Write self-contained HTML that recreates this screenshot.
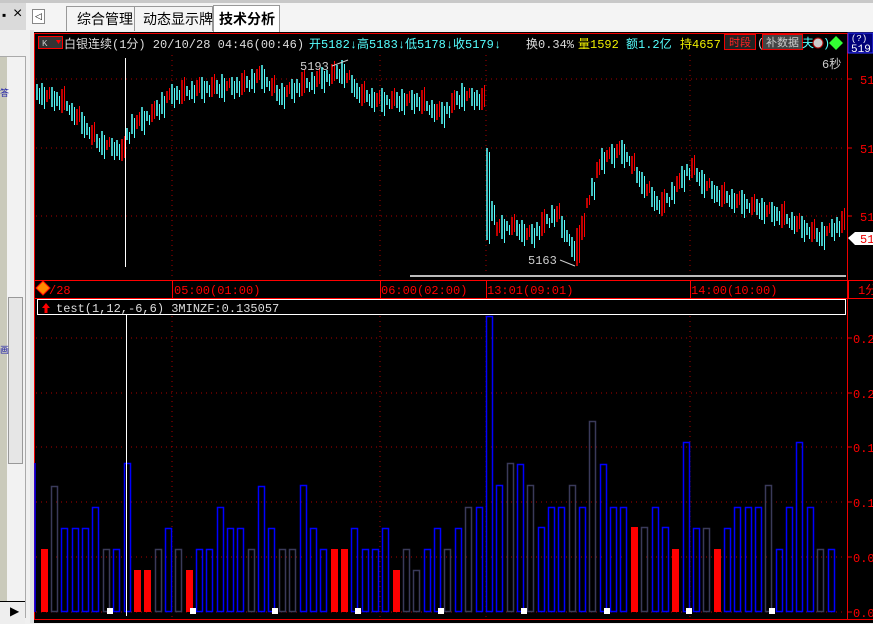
<!DOCTYPE html>
<html><head><meta charset="utf-8">
<style>
body{margin:0;width:873px;height:623px;overflow:hidden;background:#f0f0f0;font-family:"Liberation Mono","Noto Sans CJK SC",monospace;}
.abs{position:absolute}
</style></head>
<body>
<div class="abs" style="left:0;top:0;width:873px;height:30px;background:#f4f4f4;border-top:3px solid #c8c8c8;box-sizing:border-box"></div>
<div class="abs" style="left:0;top:3px;width:26px;height:27px;background:#dadada"></div>
<div class="abs" style="left:2px;top:8px;font:bold 12px 'Liberation Sans',sans-serif;color:#000">▪</div>
<div class="abs" style="left:13px;top:5px;font:16px 'Liberation Sans',sans-serif;color:#000">×</div>
<div class="abs" style="left:32px;top:9px;width:11px;height:13px;border:1px solid #888;background:#fff;font:9px sans-serif;text-align:center;line-height:13px">◁</div>
<div class="abs" style="left:66px;top:6px;width:67px;height:24px;border:1px solid #999;border-bottom:none;background:#f4f4f4"></div>
<div class="abs" style="left:134px;top:6px;width:77px;height:24px;border:1px solid #999;border-bottom:none;background:#f4f4f4"></div>
<div class="abs" style="left:213px;top:5px;width:65px;height:26px;border:1px solid #999;border-bottom:none;background:#fff"></div>
<div class="abs" style="left:77px;top:9px;font:14px 'Noto Sans CJK SC',sans-serif;color:#000">综合管理</div>
<div class="abs" style="left:143px;top:9px;font:14px 'Noto Sans CJK SC',sans-serif;color:#000">动态显示牌</div>
<div class="abs" style="left:219px;top:9px;font:bold 14px 'Noto Sans CJK SC',sans-serif;color:#000">技术分析</div>
<div class="abs" style="left:0;top:56px;width:26px;height:562px;background:#f0f0f0;border:1px solid #aaa;box-sizing:border-box"></div>
<div class="abs" style="left:0;top:57px;width:7px;height:550px;background:#cacabb"></div>
<div class="abs" style="left:7px;top:57px;width:18px;height:550px;background:#f2f2f2"></div>
<div class="abs" style="left:8px;top:297px;width:13px;height:165px;background:#e6e6e6;border:1px solid #999"></div>
<div class="abs" style="left:0;top:86px;font:9px sans-serif;color:#22a">答</div>
<div class="abs" style="left:0;top:343px;font:9px sans-serif;color:#22a">画</div>
<div class="abs" style="left:0;top:601px;width:25px;height:22px;background:#eee;border-top:1px solid #000"></div>
<div class="abs" style="left:10px;top:604px;font:12px sans-serif">▶</div>
<div class="abs" style="left:30px;top:30px;width:4px;height:593px;background:#e0e0e0"></div>
<svg class="abs" style="left:34px;top:32px" width="839" height="591" viewBox="34 32 839 591" font-family="Liberation Mono, Noto Sans CJK SC, monospace">
<rect x="34" y="32" width="839" height="591" fill="#000"/>
<rect x="34.5" y="33.5" width="840" height="586" fill="none" stroke="#e00"/>
<g stroke="#a00" stroke-dasharray="1 4">
<path d="M36 79H846M36 148H846M36 216H846M36 338H846M36 393H846M36 447H846M36 502H846M36 557H846M36 612H846"/>
<path d="M172 55V278M380 55V278M486 55V278M690 55V278M172 316V620M380 316V620M486 316V620M690 316V620"/>
</g>
<g stroke-width="1.5">
<path id="cy" stroke="#5ff" d="M37 84V100M42 83V105M52 87V107M57 92V106M67 101V111M72 103V121M82 112V134M87 123V135M97 134V148M102 131V155M112 138V156M117 140V156M127 128V140M132 114V134M142 107V131M147 111V121M157 100V116M162 92V114M172 84V104M177 86V100M187 86V96M192 81V99M202 77V99M207 81V93M217 80V94M222 74V98M232 77V95M237 77V93M247 76V88M252 69V89M262 65V89M267 77V87M277 85V101M282 83V105M292 79V99M297 79V93M307 78V88M312 72V90M322 67V89M327 70V82M337 65V79M342 60V84M352 75V93M357 83V99M367 90V102M372 88V108M382 88V112M387 95V105M397 92V108M402 89V111M412 90V110M417 93V107M427 101V111M432 100V118M442 102V124M447 102V114M457 91V105M462 83V107M472 88V106M477 90V106M487 148V240M492 201V221M502 215V239M507 221V231M517 220V236M522 220V242M532 224V244M537 222V236M547 214V224M552 205V223M562 216V238M567 230V242M572 237V257M592 178V196M602 148V170M612 144V164M622 140V164M627 152V162M637 167V183M642 172V194M652 187V207M657 196V210M667 193V203M672 182V200M682 166V188M687 164V176M697 168V182M702 170V194M712 181V199M717 186V202M727 191V203M732 189V209M742 190V214M747 199V209M757 199V215M762 198V220M772 202V222M777 207V221M787 214V224M792 212V230M802 216V238M807 223V235M817 228V242M822 222V246M832 219V237M837 217V233"/>
<path id="rd" stroke="#f00" d="M47 90V102M62 89V113M77 109V125M92 125V145M107 140V150M122 139V161M137 115V129M152 104V122M167 91V103M182 80V104M197 80V96M212 77V97M227 81V91M242 73V95M257 69V83M272 78V96M287 85V97M302 72V96M317 71V87M332 64V84M347 73V83M362 84V106M377 93V107M392 91V109M407 94V106M422 90V114M437 104V120M452 93V113M467 91V101M482 88V110M497 222V236M512 217V235M527 228V240M542 212V236M557 206V222M577 228V266M582 216V240M587 198V208M597 162V178M607 150V162M617 144V158M632 156V174M647 184V196M662 192V216M677 176V192M692 158V178M707 181V191M722 185V207M737 194V208M752 197V215M767 205V217M782 204V228M797 216V232M812 222V242M827 226V236M842 211V233"/>
</g>
<use href="#cy" x="2.5" y="4"/>
<use href="#rd" x="2.5" y="-3"/>
<path d="M125.5 58V267" stroke="#fff"/>
<text x="300" y="70" fill="#ccc" font-size="12">5193</text><path d="M332 66L348 60" stroke="#ccc"/>
<text x="528" y="264" fill="#ccc" font-size="12">5163</text><path d="M560 260L575 266" stroke="#ccc"/>
<text x="822" y="68" fill="#ccc" font-size="12">6秒</text>
<path d="M410 276H846" stroke="#bbb" stroke-width="2"/>
<path d="M847.5 34V620" stroke="#e00"/>
<path d="M847 79h5M847 148h5M847 216h5M847 338h5M847 393h5M847 447h5M847 502h5M847 557h5M847 612h5" stroke="#e00"/>
<g fill="#f00" font-size="12">
<text x="860" y="84">51</text><text x="860" y="153">51</text><text x="860" y="221">51</text>
<text x="853" y="343">0.2</text><text x="853" y="398">0.2</text><text x="853" y="452">0.1</text><text x="853" y="507">0.1</text><text x="853" y="562">0.0</text><text x="853" y="617">0.0</text>
</g>
<path d="M848 238 L855 232 L873 232 L873 245 L855 245 Z" fill="#fff"/><text x="860" y="243" fill="#e00" font-size="12">51</text>
<rect x="848" y="33" width="25" height="20" fill="#00007a" stroke="#33f"/><text x="851" y="41" fill="#fff" font-size="9">(?)</text><text x="851" y="52" fill="#fff" font-size="11">519</text>
<rect x="38.5" y="36.5" width="24" height="12" fill="#333" stroke="#f00"/><text x="42" y="46" fill="#ccc" font-size="9">K</text><path d="M56 40 L61 40 L58.5 44Z" fill="#f00"/>
<text x="64" y="48" font-size="12" fill="#ddd">白银连续(1分) 20/10/28 04:46(00:46)</text>
<text x="309" y="48" font-size="12" fill="#5ff">开5182↓高5183↓低5178↓收5179↓</text>
<text x="526" y="48" font-size="12" fill="#ddd">换0.34%</text>
<text x="578" y="48" font-size="12" fill="#ee0">量1592</text>
<text x="626" y="48" font-size="12" fill="#5ff">额1.2亿</text>
<text x="680" y="48" font-size="12" fill="#ee0">持4657</text>
<rect x="724.5" y="34.5" width="31" height="15" fill="#222" stroke="#e00"/><text x="729" y="46" fill="#f22" font-size="11">时段</text>
<text x="757" y="47" fill="#ccc" font-size="12">(</text><rect x="762.5" y="34.5" width="40" height="15" fill="#444" stroke="#e00"/><text x="766" y="46" fill="#ccc" font-size="11">补数据</text>
<text x="802" y="47" fill="#5ff" font-size="12">夫</text><circle cx="818" cy="43" r="5" fill="#ccc" stroke="#a00"/><text x="823" y="47" fill="#5ff" font-size="12">)</text><path d="M836 36 L843 43 L836 50 L829 43Z" fill="#3f3"/>
<path d="M34 280.5H873M34 298.5H873M172.5 281V298M380.5 281V298M486.5 281V298M690.5 281V298M848.5 281V298" stroke="#f00"/>
<path d="M43 281 L50 288 L43 295 L36 288Z" fill="#f80" stroke="#f00"/>
<g fill="#f00" font-size="12">
<text x="49" y="294">/28</text><text x="174" y="294">05:00(01:00)</text><text x="381" y="294">06:00(02:00)</text><text x="487" y="294">13:01(09:01)</text><text x="691" y="294">14:00(10:00)</text><text x="858" y="294">1分</text>
</g>
<rect x="37.5" y="299.5" width="808" height="15" fill="#000" stroke="#fff"/>
<path d="M46 303 L50 308 L47.5 308 L47.5 313 L44.5 313 L44.5 308 L42 308Z" fill="#f00"/>
<text x="56" y="312" fill="#ddd" font-size="12">test(1,12,-6,6) 3MINZF:0.135057</text>
<g fill="#f00">
<rect x="41" y="549" width="7" height="63"/><rect x="134" y="570" width="7" height="42"/><rect x="144" y="570" width="7" height="42"/><rect x="186" y="570" width="7" height="42"/><rect x="331" y="549" width="7" height="63"/><rect x="341" y="549" width="7" height="63"/><rect x="393" y="570" width="7" height="42"/><rect x="631" y="527" width="7" height="85"/><rect x="672" y="549" width="7" height="63"/><rect x="714" y="549" width="7" height="63"/>
</g>
<g fill="none" stroke="#00f" stroke-width="1.5">
<path d="M35 463V612"/>
<rect x="61.5" y="528.5" width="6" height="83"/><rect x="72.5" y="528.5" width="6" height="83"/><rect x="82.5" y="528.5" width="6" height="83"/><rect x="92.5" y="507.5" width="6" height="104"/><rect x="113.5" y="549.5" width="6" height="62"/><rect x="124.5" y="463.5" width="6" height="148"/><rect x="165.5" y="528.5" width="6" height="83"/><rect x="196.5" y="549.5" width="6" height="62"/><rect x="206.5" y="549.5" width="6" height="62"/><rect x="217.5" y="507.5" width="6" height="104"/><rect x="227.5" y="528.5" width="6" height="83"/><rect x="237.5" y="528.5" width="6" height="83"/><rect x="258.5" y="486.5" width="6" height="125"/><rect x="268.5" y="528.5" width="6" height="83"/><rect x="300.5" y="485.5" width="6" height="126"/><rect x="310.5" y="528.5" width="6" height="83"/><rect x="320.5" y="549.5" width="6" height="62"/><rect x="351.5" y="528.5" width="6" height="83"/><rect x="362.5" y="549.5" width="6" height="62"/><rect x="372.5" y="549.5" width="6" height="62"/><rect x="382.5" y="528.5" width="6" height="83"/><rect x="424.5" y="549.5" width="6" height="62"/><rect x="434.5" y="528.5" width="6" height="83"/><rect x="455.5" y="528.5" width="6" height="83"/><rect x="476.5" y="507.5" width="6" height="104"/><rect x="486.5" y="316.5" width="6" height="295"/><rect x="496.5" y="485.5" width="6" height="126"/><rect x="517.5" y="464.5" width="6" height="147"/><rect x="538.5" y="527.5" width="6" height="84"/><rect x="548.5" y="507.5" width="6" height="104"/><rect x="558.5" y="507.5" width="6" height="104"/><rect x="579.5" y="507.5" width="6" height="104"/><rect x="600.5" y="464.5" width="6" height="147"/><rect x="610.5" y="507.5" width="6" height="104"/><rect x="620.5" y="507.5" width="6" height="104"/><rect x="652.5" y="507.5" width="6" height="104"/><rect x="662.5" y="527.5" width="6" height="84"/><rect x="683.5" y="442.5" width="6" height="169"/><rect x="693.5" y="528.5" width="6" height="83"/><rect x="724.5" y="528.5" width="6" height="83"/><rect x="734.5" y="507.5" width="6" height="104"/><rect x="745.5" y="507.5" width="6" height="104"/><rect x="755.5" y="507.5" width="6" height="104"/><rect x="776.5" y="549.5" width="6" height="62"/><rect x="786.5" y="507.5" width="6" height="104"/><rect x="796.5" y="442.5" width="6" height="169"/><rect x="807.5" y="507.5" width="6" height="104"/><rect x="828.5" y="549.5" width="6" height="62"/>
</g>
<g fill="none" stroke="#3a3a5a" stroke-width="1.5">
<rect x="51.5" y="486.5" width="6" height="125"/><rect x="103.5" y="549.5" width="6" height="62"/><rect x="155.5" y="549.5" width="6" height="62"/><rect x="175.5" y="549.5" width="6" height="62"/><rect x="248.5" y="549.5" width="6" height="62"/><rect x="279.5" y="549.5" width="6" height="62"/><rect x="289.5" y="549.5" width="6" height="62"/><rect x="403.5" y="549.5" width="6" height="62"/><rect x="413.5" y="570.5" width="6" height="41"/><rect x="444.5" y="549.5" width="6" height="62"/><rect x="465.5" y="507.5" width="6" height="104"/><rect x="507.5" y="463.5" width="6" height="148"/><rect x="527.5" y="485.5" width="6" height="126"/><rect x="569.5" y="485.5" width="6" height="126"/><rect x="589.5" y="421.5" width="6" height="190"/><rect x="641.5" y="527.5" width="6" height="84"/><rect x="703.5" y="528.5" width="6" height="83"/><rect x="765.5" y="485.5" width="6" height="126"/><rect x="817.5" y="549.5" width="6" height="62"/>
</g>
<path d="M126.5 315V616" stroke="#fff"/>
<g fill="#fff">
<rect x="107" y="608" width="6" height="6"/><rect x="190" y="608" width="6" height="6"/><rect x="272" y="608" width="6" height="6"/><rect x="355" y="608" width="6" height="6"/><rect x="438" y="608" width="6" height="6"/><rect x="521" y="608" width="6" height="6"/><rect x="604" y="608" width="6" height="6"/><rect x="686" y="608" width="6" height="6"/><rect x="769" y="608" width="6" height="6"/>
</g>
</svg>
</body></html>
